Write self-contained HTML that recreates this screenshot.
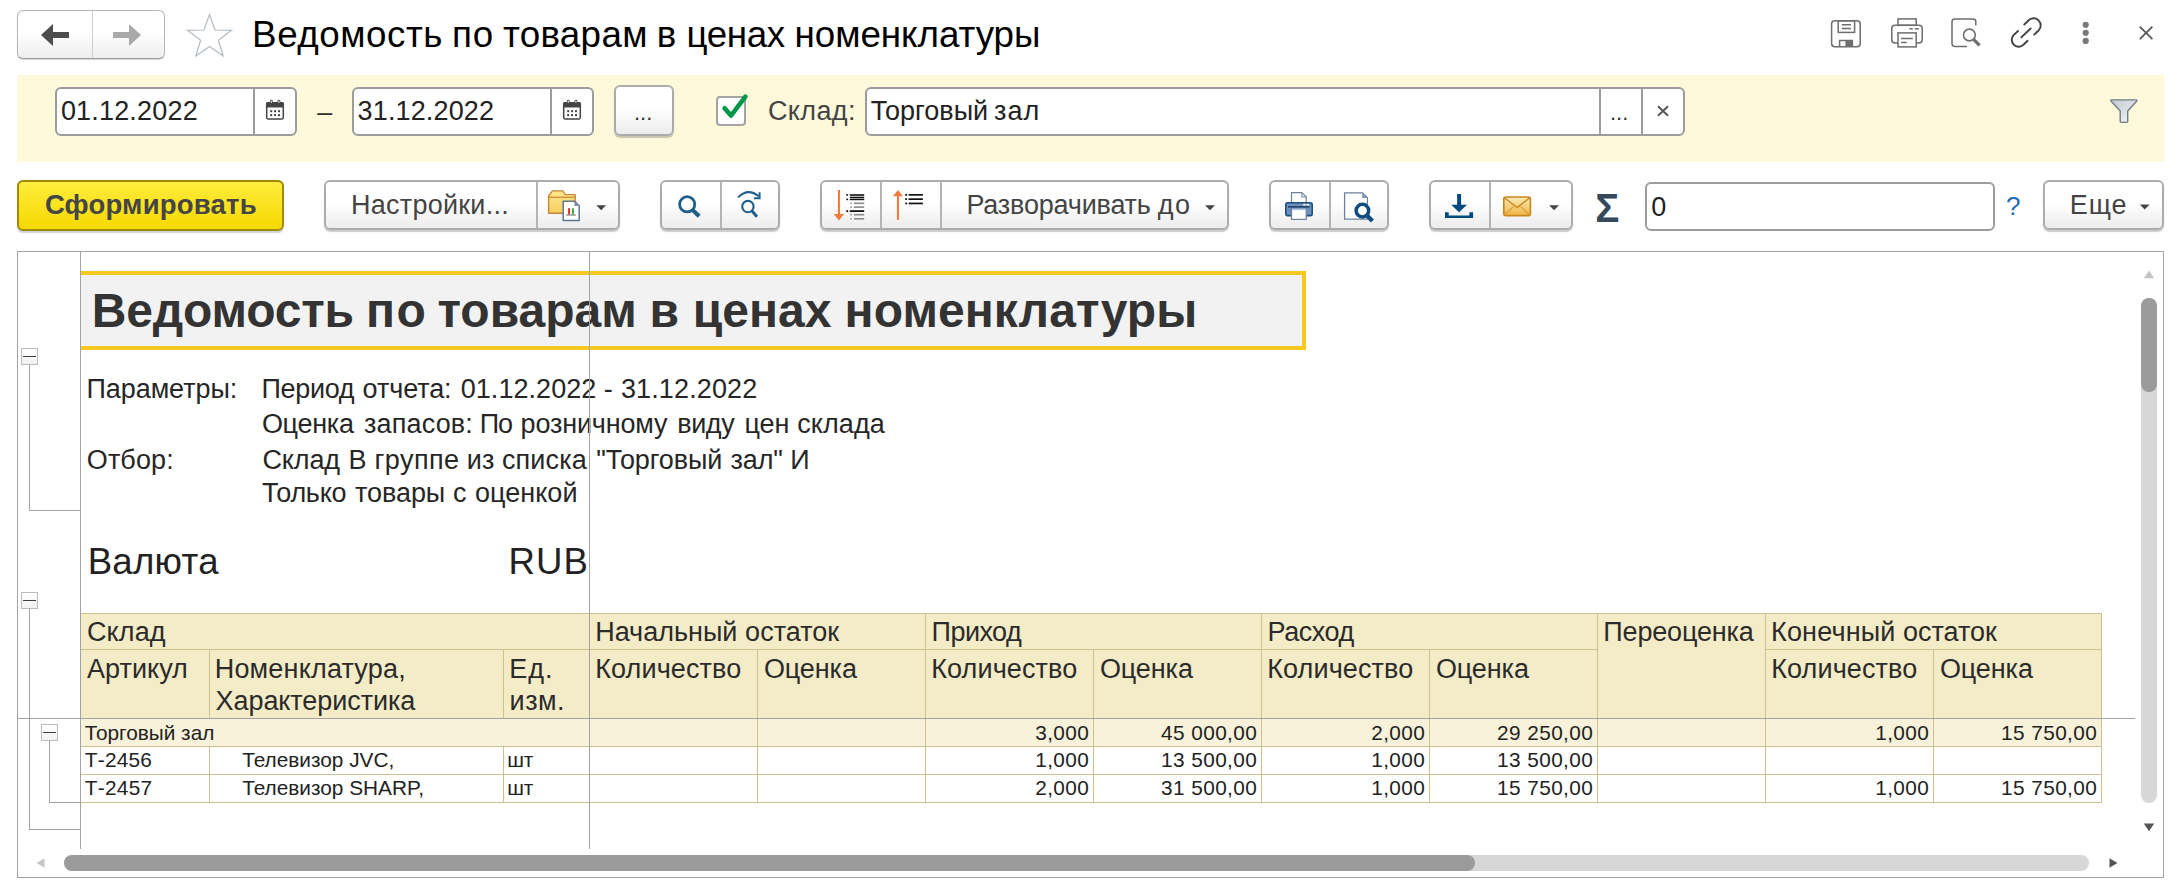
<!DOCTYPE html>
<html lang="ru">
<head>
<meta charset="utf-8">
<title>Ведомость по товарам в ценах номенклатуры</title>
<style>
*{box-sizing:border-box;margin:0;padding:0}
html,body{width:2184px;height:893px;overflow:hidden;background:#fff}
body{position:relative;font-family:"Liberation Sans",Arial,sans-serif;font-size:27px;color:#333;-webkit-font-smoothing:antialiased}
.abs{position:absolute}
.t{position:absolute;white-space:nowrap;line-height:1}
.btn{position:absolute;border:1px solid #b6b6b6;border-bottom-color:#9e9e9e;border-radius:6px;background:linear-gradient(#ffffff 0%,#ffffff 45%,#eeeeee 100%);box-shadow:0 1px 1px rgba(0,0,0,.18)}
.b2{position:absolute;border:2px solid #acacac;border-radius:6px;background:linear-gradient(#ffffff 0%,#ffffff 45%,#ececec 100%);box-shadow:0 2px 1px rgba(0,0,0,.2)}
.div{position:absolute;top:0;bottom:0;width:2px;background:#b4b4b4}
.inp{position:absolute;border:2px solid #9c9c9c;border-radius:6px;background:#fff}
.inp .d{position:absolute;top:0;bottom:0;width:2px;background:#9c9c9c}
svg{position:absolute;overflow:visible}
.p{color:#262626}
.h{color:#2b2b2b}
.r{font-size:21px;color:#222}
.n{width:164px;text-align:right}
.hl{height:1px;background:#cdbf8e}
.vl{width:1px;background:#cdbf8e}
.gl{background:#a3a3a3}
.gbox{width:17px;height:17px;border:1px solid #bcbcbc;background:linear-gradient(#fff,#f2f2f2)}
.gbox:after{content:"";position:absolute;left:1px;top:7px;width:13px;height:1px;background:#3c3c3c}

</style>
</head>
<body>

<!-- ===== top bar ===== -->
<div class="btn" style="left:17px;top:10px;width:148px;height:49px">
  <div class="div" style="left:74px;width:1px;background:#cfcfcf"></div>
  <svg style="left:23px;top:12px" width="30" height="24" viewBox="0 0 30 24"><path d="M0 12 L12 1 L12 9 L28 9 L28 15 L12 15 L12 23 Z" fill="#4d4d4d"/></svg>
  <svg style="left:95px;top:12px" width="30" height="24" viewBox="0 0 30 24"><path d="M28 12 L16 1 L16 9 L0 9 L0 15 L16 15 L16 23 Z" fill="#a9a9a9"/></svg>
</div>
<svg style="left:186px;top:13px" width="47" height="44" viewBox="0 0 47 44"><path d="M23.5 1.5 L29 17 L45.5 17.3 L32.4 27.3 L37.2 43 L23.5 33.6 L9.8 43 L14.6 27.3 L1.5 17.3 L18 17 Z" fill="#fff" stroke="#b3bbc3" stroke-width="1.2" stroke-linejoin="miter"/></svg>
<!--FIT:title-->
<div class="t" style="left:252.1px;top:17.3px;font-size:36.75px;color:#000;letter-spacing:0.53px">Ведомость</div>
<div class="t" style="left:452.0px;top:17.3px;font-size:36.75px;color:#000;letter-spacing:0.95px">по</div>
<div class="t" style="left:502.9px;top:17.3px;font-size:36.75px;color:#000;letter-spacing:0.33px">товарам</div>
<div class="t" style="left:656.7px;top:17.3px;font-size:36.75px;color:#000">в</div>
<div class="t" style="left:686.5px;top:17.3px;font-size:36.75px;color:#000;letter-spacing:-0.37px">ценах</div>
<div class="t" style="left:794.5px;top:17.3px;font-size:36.75px;color:#000;letter-spacing:-0.04px">номенклатуры</div>
<!--/FIT:title-->

<!-- ===== filter band ===== -->
<div class="abs" style="left:17px;top:75px;width:2147px;height:87px;background:#fff9db"></div>

<div class="inp" style="left:55px;top:87px;width:242px;height:49px"><div class="d" style="left:196px"></div></div>
<div class="t" style="left:317.2px;top:99px;color:#2e2e2e">–</div>
<div class="inp" style="left:352px;top:87px;width:242px;height:49px"><div class="d" style="left:196px"></div></div>
<div class="b2" style="left:614px;top:85px;width:60px;height:51px"></div>
<div class="t" style="left:634px;top:102px;font-size:22px">...</div>

<div class="abs" style="left:716px;top:96px;width:30px;height:30px;border:2px solid #a4a4a4;border-radius:4px;background:#fff"></div>
<div class="inp" style="left:865px;top:87px;width:820px;height:49px"><div class="d" style="left:732px"></div><div class="d" style="left:774px"></div></div>
<div class="t" style="left:1610px;top:102px;font-size:22px">...</div>

<!-- ===== command bar ===== -->
<div class="b2" id="bform" style="left:17px;top:180px;width:267px;height:51px;border-color:#9f8b00;background:linear-gradient(#ffec3d,#f5d900);box-shadow:0 2px 1px rgba(90,100,130,.3)"></div>

<div class="b2" style="left:324px;top:180px;width:296px;height:50px"><div class="div" style="left:210px"></div></div>

<div class="b2" style="left:660px;top:180px;width:120px;height:50px"><div class="div" style="left:58px"></div></div>
<div class="b2" style="left:820px;top:180px;width:409px;height:50px"><div class="div" style="left:58px"></div><div class="div" style="left:118px"></div></div>
<div class="b2" style="left:1269px;top:180px;width:120px;height:50px"><div class="div" style="left:58px"></div></div>
<div class="b2" style="left:1429px;top:180px;width:144px;height:50px"><div class="div" style="left:58px"></div></div>
<div class="t" style="left:1595.3px;top:187.7px;font-size:40px;font-weight:bold;color:#34495c">Σ</div>
<div class="inp" style="left:1645px;top:182px;width:350px;height:49px"></div>
<div class="t" style="left:1651.3px;top:193.7px;color:#222">0</div>
<div class="t" style="left:2006px;top:193px;color:#1f6db5;font-size:26px">?</div>
<div class="b2" style="left:2043px;top:180px;width:121px;height:50px"></div>

<!--FIT:cmd-->
<div class="t" style="left:44.9px;top:190.5px;font-size:27.5px;color:#454545;font-weight:bold;letter-spacing:0.20px">Сформировать</div>
<div class="t" style="left:351.1px;top:191.9px;font-size:27px;color:#444;letter-spacing:0.24px">Настройки...</div>
<div class="t" style="left:966.4px;top:191.9px;font-size:27px;color:#444;letter-spacing:-0.19px">Разворачивать</div>
<div class="t" style="left:1157.8px;top:191.9px;font-size:27px;color:#444;letter-spacing:1.50px">до</div>
<div class="t" style="left:2069.8px;top:191.9px;font-size:27px;color:#444;letter-spacing:0.90px">Еще</div>
<!--/FIT:cmd-->
<!--FIT:flt-->
<div class="t" style="left:60.9px;top:98.4px;font-size:27px;color:#222;letter-spacing:0.18px">01.12.2022</div>
<div class="t" style="left:357.6px;top:98.4px;font-size:27px;color:#222;letter-spacing:0.14px">31.12.2022</div>
<div class="t" style="left:870.7px;top:98.4px;font-size:27px;color:#222">Торговый</div>
<div class="t" style="left:994.1px;top:98.4px;font-size:27px;color:#222;letter-spacing:0.95px">зал</div>
<div class="t" style="left:767.9px;top:98.4px;font-size:27px;color:#444;letter-spacing:0.38px">Склад:</div>
<!--/FIT:flt-->

<!-- ===== report area ===== -->
<div class="abs" id="rep" style="left:17px;top:251px;width:2147px;height:627px;border:1px solid #a3a3a3;background:#fff"></div>

<!-- title block -->
<div class="abs" style="left:81px;top:271px;width:1225px;height:79px;background:#f2f2f2;border:4px solid #f7c81f;border-left:none"></div>
<!--FIT:rtitle-->
<div class="t" style="left:91.8px;top:287.1px;font-size:48px;color:#333;font-weight:bold;letter-spacing:-0.19px">Ведомость</div>
<div class="t" style="left:366.1px;top:287.1px;font-size:48px;color:#333;font-weight:bold;letter-spacing:1.50px">по</div>
<div class="t" style="left:437.4px;top:287.1px;font-size:48px;color:#333;font-weight:bold;letter-spacing:0.02px">товарам</div>
<div class="t" style="left:649.4px;top:287.1px;font-size:48px;color:#333;font-weight:bold">в</div>
<div class="t" style="left:692.7px;top:287.1px;font-size:48px;color:#333;font-weight:bold;letter-spacing:0.02px">ценах</div>
<div class="t" style="left:844.6px;top:287.1px;font-size:48px;color:#333;font-weight:bold;letter-spacing:0.08px">номенклатуры</div>
<!--/FIT:rtitle-->

<!-- params -->
<!--FIT:params-->
<div class="t" style="left:86.5px;top:375.5px;font-size:27px;color:#262626;letter-spacing:-0.08px">Параметры:</div>
<div class="t" style="left:261.5px;top:375.5px;font-size:27px;color:#262626;letter-spacing:-0.34px">Период</div>
<div class="t" style="left:362.6px;top:375.5px;font-size:27px;color:#262626;letter-spacing:-0.10px">отчета:</div>
<div class="t" style="left:460.7px;top:375.5px;font-size:27px;color:#262626;letter-spacing:0.06px">01.12.2022</div>
<div class="t" style="left:603.8px;top:375.5px;font-size:27px;color:#262626">-</div>
<div class="t" style="left:620.9px;top:375.5px;font-size:27px;color:#262626;letter-spacing:0.14px">31.12.2022</div>
<div class="t" style="left:261.9px;top:410.9px;font-size:27px;color:#262626;letter-spacing:-0.28px">Оценка</div>
<div class="t" style="left:364.0px;top:410.9px;font-size:27px;color:#262626;letter-spacing:0.16px">запасов:</div>
<div class="t" style="left:479.7px;top:410.9px;font-size:27px;color:#262626;letter-spacing:-1.20px">По</div>
<div class="t" style="left:520.6px;top:410.9px;font-size:27px;color:#262626;letter-spacing:-0.18px">розничному</div>
<div class="t" style="left:677.2px;top:410.9px;font-size:27px;color:#262626;letter-spacing:-0.37px">виду</div>
<div class="t" style="left:744.5px;top:410.9px;font-size:27px;color:#262626;letter-spacing:-0.05px">цен</div>
<div class="t" style="left:797.2px;top:410.9px;font-size:27px;color:#262626;letter-spacing:0.10px">склада</div>
<div class="t" style="left:86.8px;top:447.1px;font-size:27px;color:#262626;letter-spacing:0.10px">Отбор:</div>
<div class="t" style="left:262.4px;top:447.1px;font-size:27px;color:#262626;letter-spacing:-0.12px">Склад</div>
<div class="t" style="left:348.6px;top:447.1px;font-size:27px;color:#262626">В</div>
<div class="t" style="left:374.4px;top:447.1px;font-size:27px;color:#262626;letter-spacing:0.48px">группе</div>
<div class="t" style="left:466.7px;top:447.1px;font-size:27px;color:#262626;letter-spacing:0.30px">из</div>
<div class="t" style="left:502.0px;top:447.1px;font-size:27px;color:#262626;letter-spacing:0.12px">списка</div>
<div class="t" style="left:596.2px;top:447.1px;font-size:27px;color:#262626;letter-spacing:-0.12px">"Торговый</div>
<div class="t" style="left:730.4px;top:447.1px;font-size:27px;color:#262626;letter-spacing:-0.07px">зал"</div>
<div class="t" style="left:790.3px;top:447.1px;font-size:27px;color:#262626">И</div>
<div class="t" style="left:262.1px;top:480.2px;font-size:27px;color:#262626;letter-spacing:-0.26px">Только</div>
<div class="t" style="left:355.0px;top:480.2px;font-size:27px;color:#262626;letter-spacing:-0.06px">товары</div>
<div class="t" style="left:452.9px;top:480.2px;font-size:27px;color:#262626">с</div>
<div class="t" style="left:474.9px;top:480.2px;font-size:27px;color:#262626;letter-spacing:0.05px">оценкой</div>
<!--/FIT:params-->
<!--FIT:valuta-->
<div class="t" style="left:87.7px;top:544.3px;font-size:36.6px;color:#222;letter-spacing:0.28px">Валюта</div>
<div class="t" style="left:508.4px;top:544.3px;font-size:36.6px;color:#222;letter-spacing:1.10px">RUB</div>
<!--/FIT:valuta-->

<!-- table backgrounds -->
<div class="abs" style="left:81px;top:613px;width:2021px;height:105px;background:#f4ecc6"></div>
<div class="abs" style="left:81px;top:719px;width:2021px;height:27px;background:#f8f2da"></div>

<!-- table horizontal lines -->
<div class="abs hl" style="left:81px;top:613px;width:2021px"></div>
<div class="abs hl" style="left:81px;top:649px;width:1517px"></div>
<div class="abs hl" style="left:1765px;top:649px;width:337px"></div>
<div class="abs hl" style="left:81px;top:746px;width:2021px"></div>
<div class="abs hl" style="left:81px;top:774px;width:2021px"></div>
<div class="abs hl" style="left:81px;top:802px;width:2021px"></div>

<!-- table vertical lines -->
<div class="abs vl" style="left:209px;top:649px;height:69px"></div>
<div class="abs vl" style="left:503px;top:649px;height:69px"></div>
<div class="abs vl" style="left:209px;top:746px;height:56px"></div>
<div class="abs vl" style="left:503px;top:746px;height:56px"></div>
<div class="abs vl" style="left:757px;top:649px;height:153px"></div>
<div class="abs vl" style="left:925px;top:613px;height:189px"></div>
<div class="abs vl" style="left:1093px;top:649px;height:153px"></div>
<div class="abs vl" style="left:1261px;top:613px;height:189px"></div>
<div class="abs vl" style="left:1429px;top:649px;height:153px"></div>
<div class="abs vl" style="left:1597px;top:613px;height:189px"></div>
<div class="abs vl" style="left:1765px;top:613px;height:189px"></div>
<div class="abs vl" style="left:1933px;top:649px;height:153px"></div>
<div class="abs vl" style="left:2101px;top:613px;height:190px"></div>

<!-- grey structure lines -->
<div class="abs gl" style="left:80px;top:252px;width:1px;height:597px"></div>
<div class="abs gl" style="left:589px;top:252px;width:1px;height:597px"></div>
<div class="abs gl" style="left:18px;top:718px;width:2117px;height:1px"></div>

<!-- header texts -->
<!--FIT:hdr-->
<div class="t" style="left:87.0px;top:619.0px;font-size:27px;color:#2b2b2b;letter-spacing:0.12px">Склад</div>
<div class="t" style="left:595.2px;top:619.0px;font-size:27px;color:#2b2b2b">Начальный</div>
<div class="t" style="left:745.1px;top:619.0px;font-size:27px;color:#2b2b2b;letter-spacing:0.03px">остаток</div>
<div class="t" style="left:931.6px;top:619.0px;font-size:27px;color:#2b2b2b;letter-spacing:-0.56px">Приход</div>
<div class="t" style="left:1267.6px;top:619.0px;font-size:27px;color:#2b2b2b;letter-spacing:-0.46px">Расход</div>
<div class="t" style="left:1603.3px;top:619.0px;font-size:27px;color:#2b2b2b;letter-spacing:-0.17px">Переоценка</div>
<div class="t" style="left:1771.1px;top:619.0px;font-size:27px;color:#2b2b2b;letter-spacing:0.14px">Конечный</div>
<div class="t" style="left:1902.9px;top:619.0px;font-size:27px;color:#2b2b2b">остаток</div>
<div class="t" style="left:87.1px;top:655.6px;font-size:27px;color:#2b2b2b;letter-spacing:0.02px">Артикул</div>
<div class="t" style="left:214.7px;top:655.6px;font-size:27px;color:#2b2b2b;letter-spacing:0.19px">Номенклатура,</div>
<div class="t" style="left:509.2px;top:655.6px;font-size:27px;color:#2b2b2b;letter-spacing:1.05px">Ед.</div>
<div class="t" style="left:595.2px;top:655.6px;font-size:27px;color:#2b2b2b;letter-spacing:0.12px">Количество</div>
<div class="t" style="left:763.9px;top:655.6px;font-size:27px;color:#2b2b2b;letter-spacing:-0.10px">Оценка</div>
<div class="t" style="left:931.2px;top:655.6px;font-size:27px;color:#2b2b2b;letter-spacing:0.12px">Количество</div>
<div class="t" style="left:1099.9px;top:655.6px;font-size:27px;color:#2b2b2b;letter-spacing:-0.10px">Оценка</div>
<div class="t" style="left:1267.2px;top:655.6px;font-size:27px;color:#2b2b2b;letter-spacing:0.12px">Количество</div>
<div class="t" style="left:1435.9px;top:655.6px;font-size:27px;color:#2b2b2b;letter-spacing:-0.10px">Оценка</div>
<div class="t" style="left:1771.2px;top:655.6px;font-size:27px;color:#2b2b2b;letter-spacing:0.12px">Количество</div>
<div class="t" style="left:1939.9px;top:655.6px;font-size:27px;color:#2b2b2b;letter-spacing:-0.10px">Оценка</div>
<div class="t" style="left:215.6px;top:687.8px;font-size:27px;color:#2b2b2b;letter-spacing:-0.08px">Характеристика</div>
<div class="t" style="left:509.6px;top:687.8px;font-size:27px;color:#2b2b2b;letter-spacing:0.47px">изм.</div>
<!--/FIT:hdr-->

<!-- data rows -->
<!--FIT:rows-->
<div class="t" style="left:84.8px;top:722.6px;font-size:20.8px;color:#222">Торговый зал</div>
<div class="t" style="left:1035.2px;top:722.6px;font-size:20.8px;letter-spacing:0.4px;color:#222">3,000</div>
<div class="t" style="left:1161.1px;top:722.6px;font-size:20.8px;letter-spacing:0.4px;color:#222">45 000,00</div>
<div class="t" style="left:1371.2px;top:722.6px;font-size:20.8px;letter-spacing:0.4px;color:#222">2,000</div>
<div class="t" style="left:1497.1px;top:722.6px;font-size:20.8px;letter-spacing:0.4px;color:#222">29 250,00</div>
<div class="t" style="left:1875.2px;top:722.6px;font-size:20.8px;letter-spacing:0.4px;color:#222">1,000</div>
<div class="t" style="left:2001.1px;top:722.6px;font-size:20.8px;letter-spacing:0.4px;color:#222">15 750,00</div>
<div class="t" style="left:84.8px;top:750.4px;font-size:20.8px;color:#222;letter-spacing:0.24px">Т-2456</div>
<div class="t" style="left:242.2px;top:750.4px;font-size:20.8px;color:#222">Телевизор JVC,</div>
<div class="t" style="left:507.2px;top:750.4px;font-size:20.8px;color:#222">шт</div>
<div class="t" style="left:1035.2px;top:750.4px;font-size:20.8px;letter-spacing:0.4px;color:#222">1,000</div>
<div class="t" style="left:1161.1px;top:750.4px;font-size:20.8px;letter-spacing:0.4px;color:#222">13 500,00</div>
<div class="t" style="left:1371.2px;top:750.4px;font-size:20.8px;letter-spacing:0.4px;color:#222">1,000</div>
<div class="t" style="left:1497.1px;top:750.4px;font-size:20.8px;letter-spacing:0.4px;color:#222">13 500,00</div>
<div class="t" style="left:84.8px;top:778.3px;font-size:20.8px;color:#222;letter-spacing:0.28px">Т-2457</div>
<div class="t" style="left:242.2px;top:778.3px;font-size:20.8px;color:#222">Телевизор SHARP,</div>
<div class="t" style="left:507.2px;top:778.3px;font-size:20.8px;color:#222">шт</div>
<div class="t" style="left:1035.2px;top:778.3px;font-size:20.8px;letter-spacing:0.4px;color:#222">2,000</div>
<div class="t" style="left:1161.1px;top:778.3px;font-size:20.8px;letter-spacing:0.4px;color:#222">31 500,00</div>
<div class="t" style="left:1371.2px;top:778.3px;font-size:20.8px;letter-spacing:0.4px;color:#222">1,000</div>
<div class="t" style="left:1497.1px;top:778.3px;font-size:20.8px;letter-spacing:0.4px;color:#222">15 750,00</div>
<div class="t" style="left:1875.2px;top:778.3px;font-size:20.8px;letter-spacing:0.4px;color:#222">1,000</div>
<div class="t" style="left:2001.1px;top:778.3px;font-size:20.8px;letter-spacing:0.4px;color:#222">15 750,00</div>
<!--/FIT:rows-->

<!-- group gutters -->
<div class="abs gl" style="left:29px;top:365px;width:1px;height:146px"></div>
<div class="abs gl" style="left:29px;top:510px;width:51px;height:1px"></div>
<div class="abs gbox" style="left:21px;top:348px"></div>

<div class="abs gl" style="left:29px;top:609px;width:1px;height:221px"></div>
<div class="abs gl" style="left:29px;top:829px;width:51px;height:1px"></div>
<div class="abs gbox" style="left:21px;top:592px"></div>

<div class="abs gl" style="left:49px;top:741px;width:1px;height:62px"></div>
<div class="abs gl" style="left:49px;top:802px;width:31px;height:1px"></div>
<div class="abs gbox" style="left:41px;top:724px"></div>

<!-- vertical scrollbar -->
<div class="abs" style="left:2141px;top:298px;width:16px;height:505px;border-radius:8px;background:#d7d7d7"></div>
<div class="abs" style="left:2141px;top:298px;width:16px;height:94px;border-radius:8px;background:#9b9b9b"></div>
<svg style="left:2143.3px;top:269.6px" width="12" height="9" viewBox="0 0 12 9"><path d="M0.8 8.3 L6 0.5 L11.2 8.3 Z" fill="#c4c4c4"/></svg>
<svg style="left:2143.3px;top:822.6px" width="12" height="9" viewBox="0 0 12 9"><path d="M0.8 0.5 L6 8.3 L11.2 0.5 Z" fill="#555"/></svg>

<!-- horizontal scrollbar -->
<div class="abs" style="left:64px;top:855px;width:2025px;height:16px;border-radius:8px;background:#d7d7d7"></div>
<div class="abs" style="left:64px;top:855px;width:1411px;height:16px;border-radius:8px;background:#9b9b9b"></div>
<svg style="left:36px;top:858px" width="9" height="10" viewBox="0 0 9 10"><path d="M8.5 0.3 L0.5 5 L8.5 9.7 Z" fill="#c6c6c6"/></svg>
<svg style="left:2108.6px;top:858px" width="9" height="10" viewBox="0 0 9 10"><path d="M0.5 0.3 L8.5 5 L0.5 9.7 Z" fill="#555"/></svg>

<!-- ===== icons overlay (page coordinates) ===== -->
<svg id="ico" style="left:0;top:0" width="2184" height="893" viewBox="0 0 2184 893">
<defs>
  <linearGradient id="gFun" x1="0" y1="0" x2="1" y2="1"><stop offset="0" stop-color="#c3cad3"/><stop offset="1" stop-color="#f4f5f7"/></linearGradient>
  <linearGradient id="gEnv" x1="0" y1="0" x2="0" y2="1"><stop offset="0" stop-color="#fdecb8"/><stop offset="1" stop-color="#efb544"/></linearGradient>
  <linearGradient id="gFold" x1="0" y1="0" x2="0" y2="1"><stop offset="0" stop-color="#ffe88a"/><stop offset="1" stop-color="#f7cf62"/></linearGradient>
</defs>

<!-- calendars -->
<g>
    <rect x="266.7" y="102.7" width="16.6" height="16.4" rx="1.6" fill="#fff" stroke="#444" stroke-width="1.5"/>
    <path d="M266 104.2 Q266 102 268.2 102 L281.8 102 Q284 102 284 104.2 L284 107.6 L266 107.6 Z" fill="#444"/>
    <rect x="269.9" y="99.8" width="2.8" height="4.6" rx="1.2" fill="#444"/>
    <rect x="277.5" y="99.8" width="2.8" height="4.6" rx="1.2" fill="#444"/>
    <rect x="270.7" y="100.6" width="1.2" height="2.2" fill="#e8e8e8"/>
    <rect x="278.3" y="100.6" width="1.2" height="2.2" fill="#e8e8e8"/>
    <g fill="#444">
      <rect x="270.2" y="110.2" width="2" height="2"/><rect x="274.1" y="110.2" width="2" height="2"/><rect x="278" y="110.2" width="2" height="2"/>
      <rect x="270.2" y="114.1" width="2" height="2"/><rect x="274.1" y="114.1" width="2" height="2"/><rect x="278" y="114.1" width="2" height="2"/>
    </g>
</g>
<g transform="translate(297 0)">
    <rect x="266.7" y="102.7" width="16.6" height="16.4" rx="1.6" fill="#fff" stroke="#444" stroke-width="1.5"/>
    <path d="M266 104.2 Q266 102 268.2 102 L281.8 102 Q284 102 284 104.2 L284 107.6 L266 107.6 Z" fill="#444"/>
    <rect x="269.9" y="99.8" width="2.8" height="4.6" rx="1.2" fill="#444"/>
    <rect x="277.5" y="99.8" width="2.8" height="4.6" rx="1.2" fill="#444"/>
    <rect x="270.7" y="100.6" width="1.2" height="2.2" fill="#e8e8e8"/>
    <rect x="278.3" y="100.6" width="1.2" height="2.2" fill="#e8e8e8"/>
    <g fill="#444">
      <rect x="270.2" y="110.2" width="2" height="2"/><rect x="274.1" y="110.2" width="2" height="2"/><rect x="278" y="110.2" width="2" height="2"/>
      <rect x="270.2" y="114.1" width="2" height="2"/><rect x="274.1" y="114.1" width="2" height="2"/><rect x="278" y="114.1" width="2" height="2"/>
    </g>
</g>

<!-- checkbox tick -->
<path d="M724.6 108.2 L731 115.6 L745.4 96.6" fill="none" stroke="#00964a" stroke-width="4.6" stroke-linecap="round" stroke-linejoin="round"/>

<!-- funnel -->
<path d="M2111.8 99.9 L2136 99.9 Q2137.8 99.9 2136.6 101.3 L2127.7 111 L2127.7 121.3 Q2127.7 122.4 2126.6 122.4 L2121.3 122.4 Q2120.2 122.4 2120.2 121.3 L2120.2 111 L2111.2 101.3 Q2110 99.9 2111.8 99.9 Z" fill="url(#gFun)" stroke="#6f7e84" stroke-width="1.4" stroke-linejoin="round"/>

<!-- dropdown arrows -->
<path transform="translate(596.3 205.2)" d="M0 0 L9.8 0 L4.9 5 Z" fill="#444"/>
<path transform="translate(1205.1 205.2)" d="M0 0 L9.8 0 L4.9 5 Z" fill="#444"/>
<path transform="translate(1549.2 205.2)" d="M0 0 L9.8 0 L4.9 5 Z" fill="#444"/>
<path transform="translate(2139.8 204.6)" d="M0 0 L9.8 0 L4.9 5 Z" fill="#444"/>

<!-- folder + report -->
<path d="M548.6 213.2 L548.6 196 L552.4 190.9 L562.6 190.9 L565.4 194.6 L575.2 194.6 L575.2 213.2 Z" fill="url(#gFold)" stroke="#c4883a" stroke-width="1.4" stroke-linejoin="round"/>
<path d="M549 197.3 L575 197.3" stroke="#c4883a" stroke-width="1.2"/>
<path d="M563.2 201.3 L574.6 201.3 L579.2 205.9 L579.2 220.6 L563.2 220.6 Z" fill="#fff" stroke="#5f7690" stroke-width="1.5" stroke-linejoin="round"/>
<path d="M574.4 201.3 L579.2 206 L574.4 206 Z" fill="#8393a8"/>
<rect x="568.1" y="208.2" width="1.9" height="6.3" fill="#e8231c"/>
<rect x="572" y="208.2" width="1.9" height="6.3" fill="#3da23d"/>
<rect x="566.3" y="214.4" width="9.5" height="1.2" fill="#7d7d7d"/>

<!-- magnifier -->
<circle cx="687.2" cy="204.3" r="7.6" fill="none" stroke="#1f608b" stroke-width="2.8"/>
<path d="M692.6 210 L699.2 216.3" stroke="#1f608b" stroke-width="4" stroke-linecap="butt"/>

<!-- magnifier with arrow -->
<circle cx="747.9" cy="206.6" r="5.7" fill="none" stroke="#1f608b" stroke-width="2.1"/>
<path d="M752 211 L757 216.8" stroke="#1f608b" stroke-width="3"/>
<path d="M738 197.4 Q748 187.5 758.6 196.2" fill="none" stroke="#1f608b" stroke-width="2"/>
<path d="M759.6 192.3 L759.6 198.2 L754 198.2" fill="none" stroke="#1f608b" stroke-width="2"/>
<!-- expand groups icon -->
<g>
<rect x="837.9" y="190" width="2.1" height="26" fill="#f07d3d"/>
<path d="M833.7 214 L844.1 214 L838.9 220.4 Z" fill="#f07d3d"/>
<g fill="#111">
<rect x="846.3" y="194.2" width="1.8" height="1.6"/><rect x="849.8" y="194.2" width="14.4" height="1.6"/>
<rect x="849.8" y="196.7" width="14.4" height="1.3"/>
<rect x="846.3" y="198.6" width="1.8" height="1.6"/><rect x="849.8" y="198.6" width="14.4" height="1.6"/>
<rect x="846.3" y="210.2" width="1.8" height="1.8"/><rect x="849.8" y="210.2" width="14.4" height="1.8"/>
</g>
<g fill="#8a8a8a">
<rect x="850.4" y="202.5" width="1.4" height="1.6"/><rect x="854" y="202.5" width="10.2" height="1.6"/>
<rect x="850.4" y="206.3" width="1.4" height="1.6"/><rect x="854" y="206.3" width="10.2" height="1.6"/>
<rect x="850.4" y="213.9" width="1.4" height="1.6"/><rect x="854" y="213.9" width="10.2" height="1.6"/>
<rect x="850.4" y="218" width="1.4" height="1.6"/><rect x="854" y="218" width="10.2" height="1.6"/>
</g>
</g>
<!-- collapse groups icon -->
<g>
<rect x="896.9" y="195" width="2.1" height="24.8" fill="#f07d3d"/>
<path d="M892.9 196.3 L903.1 196.3 L898 189.9 Z" fill="#f07d3d"/>
<g fill="#111">
<rect x="905.2" y="194" width="1.9" height="1.7"/><rect x="908.6" y="194" width="14.3" height="1.7"/>
<rect x="905.2" y="198.3" width="1.9" height="1.7"/><rect x="908.6" y="198.3" width="14.3" height="1.7"/>
<rect x="905.2" y="202.6" width="1.9" height="1.7"/><rect x="908.6" y="202.6" width="14.3" height="1.7"/>
</g>
</g>
<!-- printer (colour) -->
<g>
<path d="M1291.5 204.5 L1291.5 192.6 L1301.8 192.6 L1306.2 197 L1306.2 204.5 Z" fill="#fff" stroke="#6e819b" stroke-width="1.2" stroke-linejoin="round"/>
<path d="M1301.8 192.6 L1306.2 197 L1301.8 197 Z" fill="#dfe5ee" stroke="#6e819b" stroke-width="0.9"/>
<rect x="1285.8" y="202.8" width="26.4" height="12.8" rx="1.8" fill="#6d90be" stroke="#1e4f83" stroke-width="1.6"/>
<rect x="1288" y="206.1" width="21.5" height="1.5" fill="#1e3f63"/>
<rect x="1303.2" y="203.9" width="2.4" height="1.6" fill="#fff"/><rect x="1306.6" y="203.9" width="2.4" height="1.6" fill="#fff"/>
<rect x="1291.5" y="208.8" width="14.7" height="10.6" fill="#fff" stroke="#6e819b" stroke-width="1.2"/>
<rect x="1292.1" y="208.6" width="13.5" height="1.5" fill="#a9c5ea"/>
</g>
<!-- preview (colour) -->
<g>
<path d="M1344.6 219.2 L1344.6 192.8 L1362.4 192.8 L1367.4 197.8 L1367.4 219.2 Z" fill="#fff" stroke="#6e819b" stroke-width="1.3" stroke-linejoin="round"/>
<path d="M1362.2 192.8 L1367.4 198 L1362.2 198 Z" fill="#8898ae"/>
<circle cx="1362.4" cy="210.6" r="6.3" fill="#fff" stroke="#0f4c7f" stroke-width="3.5"/>
<path d="M1367.2 215.6 L1372.4 221" stroke="#0f4c7f" stroke-width="4.2"/>
</g>
<!-- download -->
<g fill="#004a80">
<rect x="1457.1" y="194" width="4" height="11.5"/>
<path d="M1451.2 204.8 L1467 204.8 L1459.1 212.2 Z"/>
<path d="M1445 212.2 L1448.7 212.2 L1448.7 215.4 L1469.4 215.4 L1469.4 212.2 L1473.1 212.2 L1473.1 218 L1445 218 Z"/>
</g>
<!-- envelope -->
<g>
<rect x="1503.8" y="197" width="26.6" height="18.6" rx="2" fill="url(#gEnv)" stroke="#c8881f" stroke-width="1.7"/>
<path d="M1504.6 214.8 L1513.5 206.6 M1529.6 214.8 L1520.7 206.6" stroke="#d49a35" stroke-width="1.1" fill="none"/>
<path d="M1504.4 197.8 L1517.1 207.6 L1529.8 197.8" stroke="#c8881f" stroke-width="1.4" fill="none"/>
</g>
<!-- top-right icons -->
<g fill="none" stroke="#6e6e6e" stroke-width="1.5">
<!-- save -->
<rect x="1831.6" y="20.8" width="28.6" height="26" rx="3.2"/>
<rect x="1838.2" y="20.8" width="16.4" height="11.6"/>
<path d="M1841.8 24.8 L1851 24.8 M1841.8 28.6 L1851 28.6"/>
<path d="M1839.6 46.8 L1839.6 40.6 L1852.4 40.6 L1852.4 46.8"/>
<rect x="1845.4" y="40.6" width="7" height="6.2" fill="#6e6e6e" stroke="none"/>
<!-- printer -->
<rect x="1898" y="18.9" width="18.2" height="6.4"/>
<path d="M1898 43 L1895 43 Q1891.8 43 1891.8 39.8 L1891.8 28.5 Q1891.8 25.3 1895 25.3 L1919 25.3 Q1922.2 25.3 1922.2 28.5 L1922.2 39.8 Q1922.2 43 1919 43 L1916.2 43"/>
<rect x="1898" y="32.9" width="18.2" height="14"/>
<path d="M1901 38.4 L1912.8 38.4 M1901 42.6 L1906.8 42.6"/>
<path d="M1909.4 28.7 L1912.8 28.7 M1914.8 28.7 L1918.8 28.7"/>
<!-- preview -->
<path d="M1975.8 25.6 L1975.8 21.6 Q1975.8 18.9 1973 18.9 L1954.8 18.9 Q1952 18.9 1952 21.6 L1952 43.6 Q1952 46.4 1954.8 46.4 L1967 46.4"/>
<circle cx="1969.4" cy="35" r="5.9" stroke-width="1.6"/>
<path d="M1973.8 39.6 L1979.6 45.4" stroke-width="3.2"/>
</g>
<!-- link -->
<g fill="none" stroke="#444" stroke-width="1.95" stroke-linecap="round">
<path d="M2024.3 24.5 L2029.2 19.8 A7.1 7.1 0 0 1 2038.8 30.2 L2034.2 34.6"/>
<path d="M2018 31 L2013.4 35.4 A6.9 6.9 0 0 0 2022.9 45.3 L2027.6 40.8"/>
<path d="M2021.3 37.4 L2030.6 28.5"/>
</g>
<!-- kebab -->
<g fill="#7a7a7a">
<circle cx="2085.7" cy="24.8" r="3.1"/><circle cx="2085.7" cy="32.8" r="3.1"/><circle cx="2085.7" cy="40.9" r="3.1"/>
</g>
<!-- close -->
<path d="M2139.8 26.6 L2152.4 39.2 M2152.4 26.6 L2139.8 39.2" stroke="#555" stroke-width="1.7" fill="none"/>
<!-- clear cross -->
<path d="M1658 106.2 L1668 115.8 M1668 106.2 L1658 115.8" stroke="#555" stroke-width="1.9" fill="none"/>
</svg>

</body>
</html>
